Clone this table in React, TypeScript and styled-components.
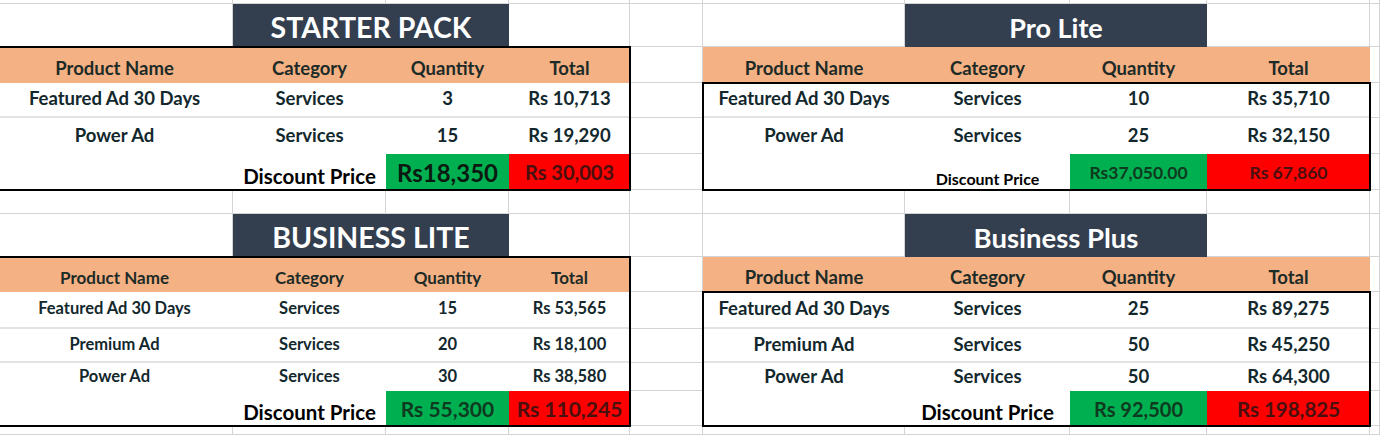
import React from 'react';
import styled, { createGlobalStyle, css } from 'styled-components';

const GlobalStyle = createGlobalStyle`
  html, body {
    margin: 0;
    padding: 0;
    background: #fff;
    overflow: hidden;
  }
  body {
    font-family: Lato, "Open Sans", sans-serif;
  }
`;

// sheet column widths / row heights, as they come out on screen
const COLS = [233, 153, 123, 121, 73, 202, 165, 137, 163];
const ROWS = [4, 43, 36, 35, 36, 36, 24, 43, 35, 37, 34, 28, 35];

const LEFT_COLS = '1fr 153px 123px 121px';
const RIGHT_COLS = '202px 165px 137px 163px';

const Sheet = styled.div`
  display: grid;
  grid-template-columns: ${COLS.map((c) => `${c}px`).join(' ')} 1fr;
  grid-template-rows: ${ROWS.map((r) => `${r}px`).join(' ')} 1fr;
  width: 100vw;
  height: 435px;
`;

const GridCell = styled.div<{ $col: number; $row: number }>`
  grid-column: ${(p) => p.$col};
  grid-row: ${(p) => p.$row};
  border-right: 1px solid #d4d4d4;
  border-bottom: 1px solid #d4d4d4;
`;

const Title = styled.div<{ $col: string; $row: number; $size: number }>`
  grid-column: ${(p) => p.$col};
  grid-row: ${(p) => p.$row};
  z-index: 1;
  display: flex;
  align-items: center;
  justify-content: center;
  padding-top: 3px;
  background: #333f4f;
  color: #fff;
  font-weight: 700;
  font-size: ${(p) => p.$size}px;
`;

const Table = styled.div<{ $col: string; $row: string; $framed: boolean; $bleed: boolean }>`
  grid-column: ${(p) => p.$col};
  grid-row: ${(p) => p.$row};
  z-index: 1;
  display: flex;
  flex-direction: column;
  margin-left: ${(p) => (p.$bleed ? '-4px' : '0')};
  ${(p) =>
    p.$framed &&
    css`
      outline: 2px solid #000;
      outline-offset: -1px;
    `}
`;

const Header = styled.div<{ $cols: string; $h: number; $size: number }>`
  display: grid;
  grid-template-columns: ${(p) => p.$cols};
  height: ${(p) => p.$h}px;
  flex-shrink: 0;
  background: #f4b183;
  color: #1d2b28;
  font-weight: 700;
  font-size: ${(p) => p.$size}px;
`;

const HeadCell = styled.div`
  display: flex;
  align-items: flex-end;
  justify-content: center;
  padding-bottom: 4px;
  white-space: nowrap;
`;

const Body = styled.div<{ $framed: boolean }>`
  flex: 1;
  display: flex;
  flex-direction: column;
  background: #fff;
  ${(p) =>
    p.$framed &&
    css`
      outline: 2px solid #000;
      outline-offset: -1px;
    `}
`;

const Row = styled.div<{ $cols: string; $h: number; $divider?: boolean }>`
  display: grid;
  grid-template-columns: ${(p) => p.$cols};
  height: ${(p) => p.$h}px;
  box-sizing: border-box;
  flex-shrink: 0;
  border-bottom: ${(p) => (p.$divider ? '2px solid #e0e4e4' : 'none')};
`;

const Cell = styled.div<{ $size: number }>`
  display: flex;
  align-items: center;
  justify-content: center;
  padding-bottom: 3px;
  color: #13282d;
  font-weight: 700;
  font-size: ${(p) => p.$size}px;
  white-space: nowrap;
`;

const Label = styled.div<{ $size: number }>`
  grid-column: 2;
  display: flex;
  align-items: flex-end;
  justify-content: center;
  padding-bottom: 2px;
  color: #000;
  font-weight: 700;
  font-size: ${(p) => p.$size}px;
  white-space: nowrap;
`;

const Price = styled.div<{ $tone: 'green' | 'red'; $size: number; $ink: string }>`
  display: flex;
  align-items: center;
  justify-content: center;
  background: ${(p) => (p.$tone === 'green' ? '#00b050' : '#ff0000')};
  color: ${(p) => p.$ink};
  font-weight: 700;
  font-size: ${(p) => p.$size}px;
  white-space: nowrap;
`;

interface PriceStyle {
  text: string;
  size: number;
  ink: string;
}

interface Pack {
  title: string;
  titleSize: number;
  side: 'left' | 'right';
  band: 'top' | 'bottom';
  headSize: number;
  bodySize: number;
  rows: string[][];
  labelSize: number;
  green: PriceStyle;
  red: PriceStyle;
}

const heads = ['Product Name', 'Category', 'Quantity', 'Total'];

const GREEN_INK = '#0e3a20';
const RED_INK = '#4a0f0f';

const packs: Pack[] = [
  {
    title: 'STARTER PACK',
    titleSize: 28.5,
    side: 'left',
    band: 'top',
    headSize: 18.5,
    bodySize: 18.5,
    rows: [
      ['Featured Ad 30 Days', 'Services', '3', 'Rs 10,713'],
      ['Power Ad', 'Services', '15', 'Rs 19,290'],
    ],
    labelSize: 20.5,
    green: { text: 'Rs18,350', size: 24, ink: '#0a1a10' },
    red: { text: 'Rs 30,003', size: 20, ink: RED_INK },
  },
  {
    title: 'Pro Lite',
    titleSize: 27,
    side: 'right',
    band: 'top',
    headSize: 18.5,
    bodySize: 18.5,
    rows: [
      ['Featured Ad 30 Days', 'Services', '10', 'Rs 35,710'],
      ['Power Ad', 'Services', '25', 'Rs 32,150'],
    ],
    labelSize: 16,
    green: { text: 'Rs37,050.00', size: 17.5, ink: GREEN_INK },
    red: { text: 'Rs 67,860', size: 17.5, ink: RED_INK },
  },
  {
    title: 'BUSINESS LITE',
    titleSize: 28.5,
    side: 'left',
    band: 'bottom',
    headSize: 17,
    bodySize: 16.5,
    rows: [
      ['Featured Ad 30 Days', 'Services', '15', 'Rs 53,565'],
      ['Premium Ad', 'Services', '20', 'Rs 18,100'],
      ['Power Ad', 'Services', '30', 'Rs 38,580'],
    ],
    labelSize: 20.5,
    green: { text: 'Rs 55,300', size: 21, ink: GREEN_INK },
    red: { text: 'Rs 110,245', size: 21, ink: RED_INK },
  },
  {
    title: 'Business Plus',
    titleSize: 27.5,
    side: 'right',
    band: 'bottom',
    headSize: 18.5,
    bodySize: 18.5,
    rows: [
      ['Featured Ad 30 Days', 'Services', '25', 'Rs 89,275'],
      ['Premium Ad', 'Services', '50', 'Rs 45,250'],
      ['Power Ad', 'Services', '50', 'Rs 64,300'],
    ],
    labelSize: 20.5,
    green: { text: 'Rs 92,500', size: 20, ink: GREEN_INK },
    red: { text: 'Rs 198,825', size: 20.5, ink: RED_INK },
  },
];

// grid lines for rows/cols, plus row heights per band
const bands = {
  top: { titleRow: 2, tableRows: '3 / 7', head: 36, rows: [35, 36], discount: 36 },
  bottom: { titleRow: 8, tableRows: '9 / 14', head: 35, rows: [37, 34, 28], discount: 35 },
};

const sides = {
  left: { titleCols: '2 / 4', tableCols: '1 / 5', cols: LEFT_COLS },
  right: { titleCols: '7 / 9', tableCols: '6 / 10', cols: RIGHT_COLS },
};

const PackTable: React.FC<{ pack: Pack }> = ({ pack }) => {
  const band = bands[pack.band];
  const side = sides[pack.side];
  const isLeft = pack.side === 'left';

  return (
    <>
      <Title $col={side.titleCols} $row={band.titleRow} $size={pack.titleSize}>
        {pack.title}
      </Title>
      <Table $col={side.tableCols} $row={band.tableRows} $framed={isLeft} $bleed={isLeft}>
        <Header $cols={side.cols} $h={band.head} $size={pack.headSize}>
          {heads.map((h) => (
            <HeadCell key={h}>{h}</HeadCell>
          ))}
        </Header>
        <Body $framed={!isLeft}>
          {pack.rows.map((row, i) => (
            <Row key={i} $cols={side.cols} $h={band.rows[i]} $divider={i < pack.rows.length - 1}>
              {row.map((value, j) => (
                <Cell key={j} $size={pack.bodySize}>
                  {value}
                </Cell>
              ))}
            </Row>
          ))}
          <Row $cols={side.cols} $h={band.discount}>
            <Label $size={pack.labelSize}>Discount Price</Label>
            <Price $tone="green" $size={pack.green.size} $ink={pack.green.ink}>
              {pack.green.text}
            </Price>
            <Price $tone="red" $size={pack.red.size} $ink={pack.red.ink}>
              {pack.red.text}
            </Price>
          </Row>
        </Body>
      </Table>
    </>
  );
};

const App: React.FC = () => {
  const cells = [];
  for (let r = 1; r <= ROWS.length + 1; r++) {
    for (let c = 1; c <= COLS.length + 1; c++) {
      cells.push(<GridCell key={`${r}-${c}`} $col={c} $row={r} />);
    }
  }

  return (
    <>
      <GlobalStyle />
      <Sheet>
        {cells}
        {packs.map((pack) => (
          <PackTable key={pack.title} pack={pack} />
        ))}
      </Sheet>
    </>
  );
};

export default App;
